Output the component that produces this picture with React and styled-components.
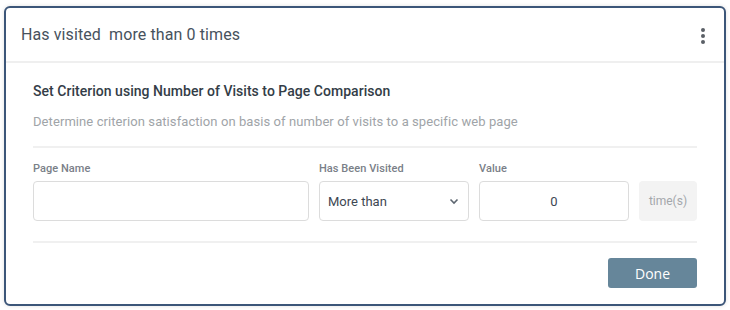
import React from "react";
import styled, { createGlobalStyle } from "styled-components";

const GlobalStyle = createGlobalStyle`
  body {
    margin: 0;
    background: #ffffff;
    font-family: Roboto, "Liberation Sans", sans-serif;
  }
`;

const Page = styled.div`
  padding: 6px 4px;
  width: 730px;
  box-sizing: border-box;
`;

const Card = styled.div`
  box-sizing: border-box;
  width: 722px;
  height: 300px;
  border: 2px solid #3c5679;
  border-radius: 6px;
  background: #fff;
  box-shadow: 0 0 4px rgba(0, 0, 0, 0.12);
  display: flex;
  flex-direction: column;
`;

const Header = styled.div`
  height: 53px;
  display: flex;
  align-items: center;
  justify-content: space-between;
  padding: 0 19px 0 15px;
  border-bottom: 2px solid #efefef;
`;

const HeaderTitle = styled.div`
  font-size: 16px;
  letter-spacing: 0.1px;
  color: #47525d;
  white-space: pre;
`;

const Kebab = styled.div`
  display: flex;
  flex-direction: column;
  gap: 2px;
  padding-top: 2px;
`;

const Dot = styled.span`
  width: 4px;
  height: 4px;
  border-radius: 50%;
  background: #5a5f66;
`;

const Body = styled.div`
  padding: 18px 27px 0;
  display: flex;
  flex-direction: column;
`;

const Title = styled.div`
  font-size: 14px;
  font-weight: 500;
  letter-spacing: 0.03px;
  color: #333d47;
  line-height: 20px;
`;

const Description = styled.div`
  margin-top: 11px;
  font-size: 13px;
  letter-spacing: 0.08px;
  color: #a0a4a8;
  line-height: 20px;
`;

const Divider = styled.div`
  height: 2px;
  background: #f0f0f0;
  margin-top: ${(p) => p.$top}px;
`;

const Fields = styled.div`
  display: flex;
  gap: 10px;
  margin-top: 13px;
  align-items: flex-end;
`;

const Field = styled.div`
  display: flex;
  flex-direction: column;
  width: ${(p) => p.$width}px;
`;

const Label = styled.div`
  font-size: 11px;
  font-weight: 500;
  letter-spacing: 0.05px;
  color: #7a8088;
  line-height: 16px;
  margin-bottom: 4px;
`;

const Box = styled.div`
  box-sizing: border-box;
  height: 40px;
  border: 1px solid #dcdcdc;
  border-radius: 4px;
  display: flex;
  align-items: center;
  justify-content: ${(p) => (p.$center ? "center" : "space-between")};
  padding: 0 8px 0 8px;
  font-size: 13px;
  color: #3d4752;
`;

const Unit = styled.div`
  box-sizing: border-box;
  width: 58px;
  height: 40px;
  border-radius: 4px;
  background: #f3f3f3;
  display: flex;
  align-items: center;
  justify-content: center;
  font-size: 12px;
  color: #a3a7ab;
`;

const Footer = styled.div`
  display: flex;
  justify-content: flex-end;
  margin-top: 15px;
`;

const DoneButton = styled.button`
  width: 89px;
  height: 30px;
  border: none;
  border-radius: 3px;
  background: #66869a;
  color: #fff;
  font-family: "Open Sans", Roboto, sans-serif;
  font-size: 14px;
  cursor: pointer;
`;

const Chevron = () => (
  <svg width="12" height="12" viewBox="0 0 12 12">
    <path d="M2.5 4.5 L6 8 L9.5 4.5" fill="none" stroke="#5d6670" strokeWidth="1.6" />
  </svg>
);

export default function App() {
  return (
    <Page>
      <GlobalStyle />
      <Card>
        <Header>
          <HeaderTitle>Has visited  more than 0 times</HeaderTitle>
          <Kebab>
            <Dot />
            <Dot />
            <Dot />
          </Kebab>
        </Header>
        <Body>
          <Title>Set Criterion using Number of Visits to Page Comparison</Title>
          <Description>
            Determine criterion satisfaction on basis of number of visits to a specific web page
          </Description>
          <Divider $top={14} />
          <Fields>
            <Field $width={276}>
              <Label>Page Name</Label>
              <Box />
            </Field>
            <Field $width={150}>
              <Label>Has Been Visited</Label>
              <Box>
                More than
                <Chevron />
              </Box>
            </Field>
            <Field $width={150}>
              <Label>Value</Label>
              <Box $center>0</Box>
            </Field>
            <Unit>time(s)</Unit>
          </Fields>
          <Divider $top={20} />
          <Footer>
            <DoneButton>Done</DoneButton>
          </Footer>
        </Body>
      </Card>
    </Page>
  );
}
